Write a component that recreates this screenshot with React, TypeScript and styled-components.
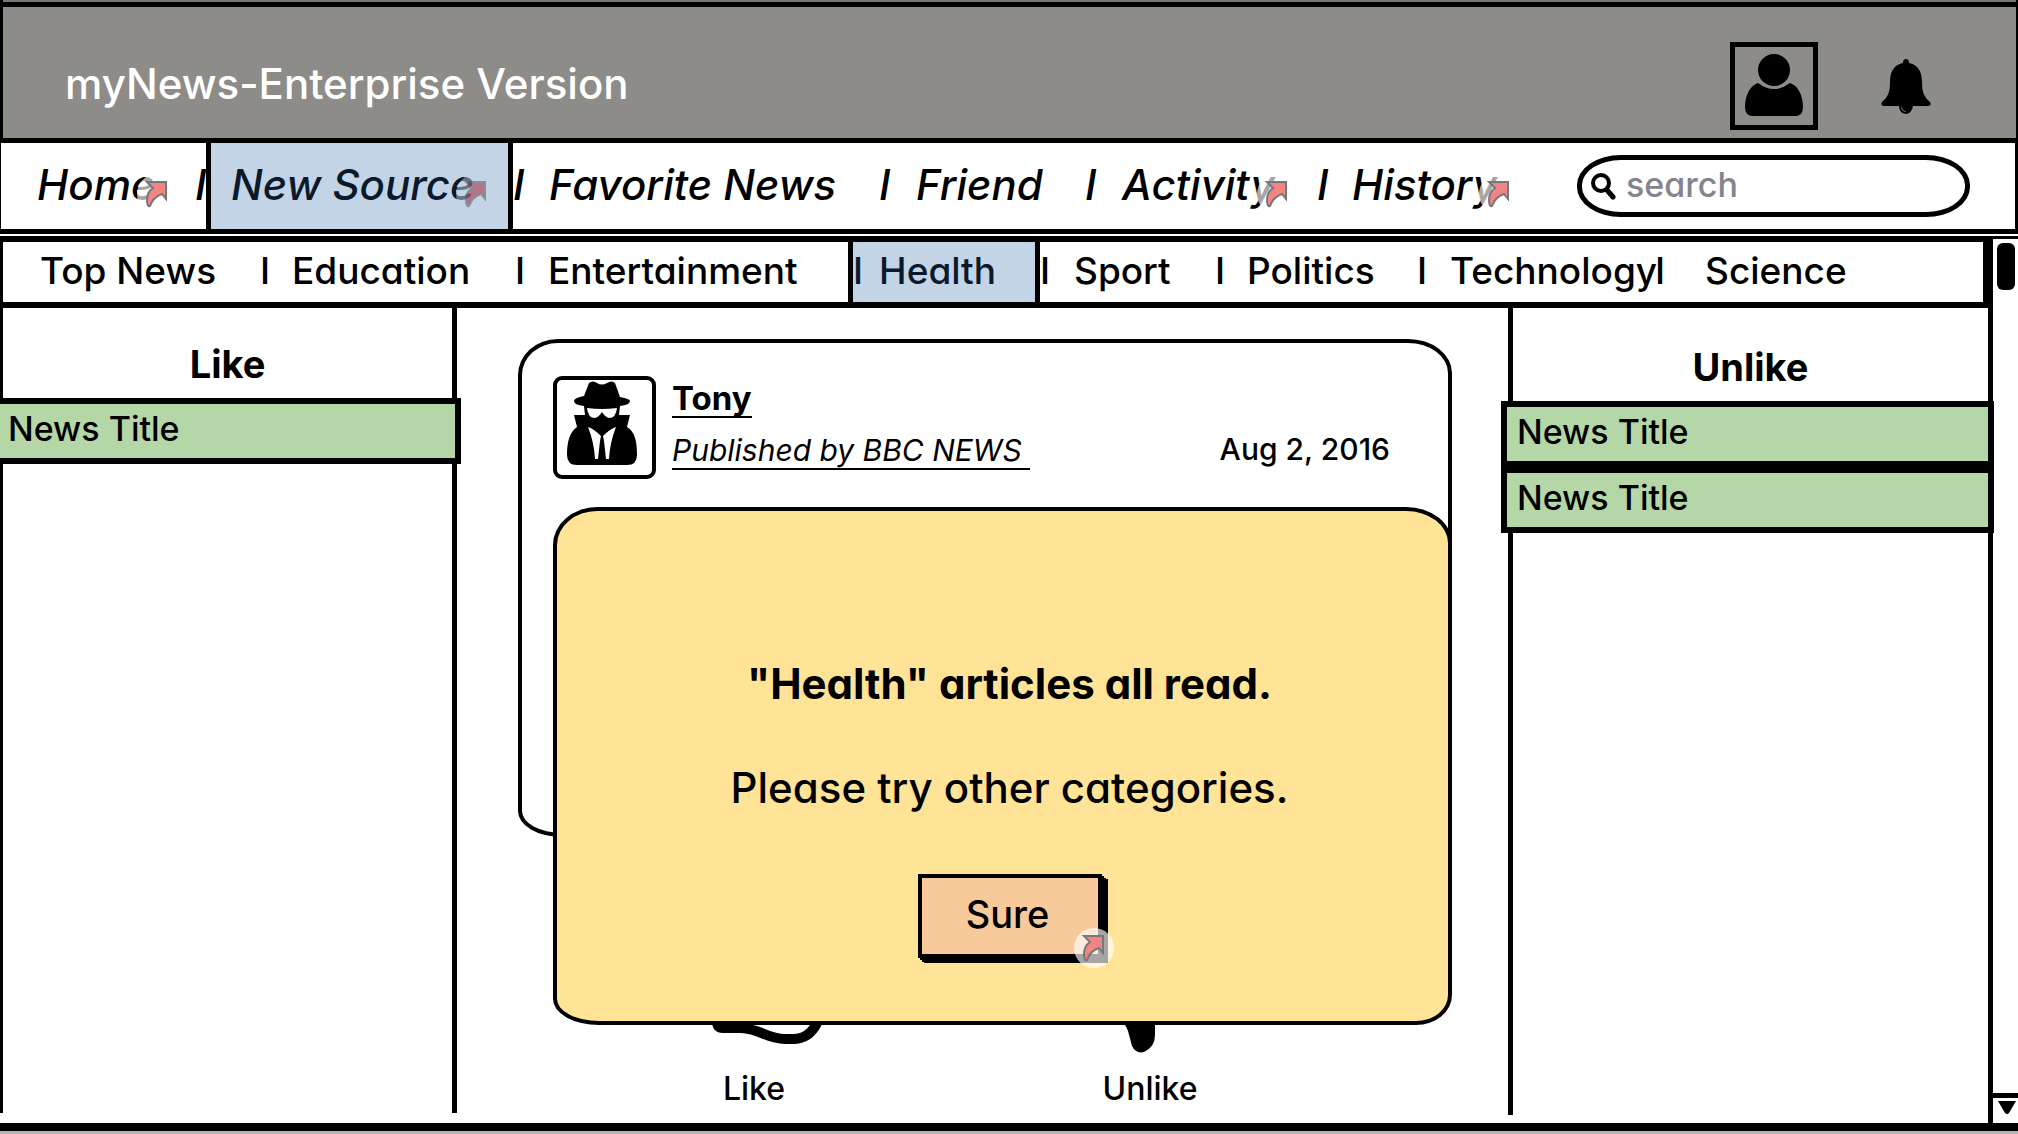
import React from "react";
import styled, { createGlobalStyle, css } from "styled-components";

const ink = "#000";
const blue = "#c3d4e6";
const green = "#b5d6a7";

const GlobalStyle = createGlobalStyle`
  *, *::before, *::after { box-sizing: border-box; }
  body { margin: 0; background: #fff; }
  body, button, input {
    font-family: Inter, "Liberation Sans", sans-serif;
    font-feature-settings: "cv11", "calt" 0;
    font-weight: 500;
    color: ${ink};
  }
  h1, h2, p, ul { margin: 0; padding: 0; font-weight: 500; }
  ul { list-style: none; }
  a { color: inherit; text-decoration: none; }
  button { cursor: pointer; }
`;

const Page = styled.div`
  min-height: 100vh;
  display: flex;
  flex-direction: column;
  overflow: hidden;
  border-bottom: 3px solid #b5b5b5;
`;

const Header = styled.header`
  height: 138px;
  flex: none;
  display: flex;
  align-items: center;
  padding: 34px 66px 0 62px;
  background: linear-gradient(#777 0 2px, ${ink} 2px 7px, #8d8c89 7px);
  border-left: 3px solid ${ink};
  border-right: 2px solid ${ink};
`;

const Brand = styled.h1`
  flex: 1;
  padding-bottom: 5px;
  color: #fff;
  font-size: 42px;
  line-height: 48px;
  white-space: nowrap;
`;

const IconButton = styled.button<{ $boxed?: boolean }>`
  width: 88px;
  height: 88px;
  padding: 0;
  display: grid;
  place-items: center;
  background: none;
  border: ${(p) => (p.$boxed ? `5px solid ${ink}` : "0")};
`;

const HeaderActions = styled.div`
  display: flex;
  gap: 44px;
`;

const MainNav = styled.nav<{ $columns: string }>`
  height: 96px;
  flex: none;
  display: grid;
  grid-template-columns: ${(p) => p.$columns};
  align-items: stretch;
  padding-left: 36px;
  border: solid ${ink};
  border-width: 5px 3px 5px 1px;
  font-size: 42px;
  font-style: italic;
`;

const SubNav = styled.nav<{ $columns: string }>`
  grid-column: 1 / 4;
  height: 72px;
  display: grid;
  grid-template-columns: ${(p) => p.$columns};
  align-items: stretch;
  padding-left: 37px;
  border: solid ${ink};
  border-width: 6px 5px 6px 3px;
  font-size: 37px;
`;

const NavItem = styled.a<{ $active?: boolean; $pad?: number }>`
  display: flex;
  align-items: center;
  gap: 16px;
  white-space: nowrap;
  padding-bottom: 3px;
  ${(p) =>
    p.$active &&
    css`
      margin: -5px 0;
      padding-left: ${p.$pad ?? 0}px;
      color: #0a1a2c;
      background: ${blue};
      border: 5px solid ${ink};
    `}
`;

const Separator = styled.span`
  display: flex;
  align-items: center;
  padding-bottom: 3px;
`;

const Linked = styled.span`
  position: relative;
`;

const Badge = styled.svg<{ $dim?: boolean }>`
  position: absolute;
  right: -22px;
  bottom: -4px;
  width: 40px;
  height: 40px;
  opacity: ${(p) => (p.$dim ? 0.75 : 1)};
`;

const SearchSlot = styled.div`
  display: flex;
  align-items: center;
  padding-right: 45px;
  font-style: normal;
`;

const SearchBox = styled.label`
  width: 100%;
  height: 62px;
  display: flex;
  align-items: center;
  gap: 10px;
  padding: 0 12px 0 8px;
  border: 5px solid ${ink};
  border-radius: 44px / 30px;
`;

const SearchInput = styled.input`
  flex: 1;
  min-width: 0;
  padding: 0 0 2px;
  border: 0;
  outline: 0;
  background: none;
  font-size: 34px;
  line-height: 40px;
  &::placeholder { color: #85838f; opacity: 1; }
`;

const Body = styled.div`
  flex: 1;
  display: grid;
  grid-template-columns: 457fr 1051fr 480fr 30px;
  grid-template-rows: 72px 1fr;
  padding-top: 2px;
  border-bottom: 8px solid ${ink};
`;

const Side = styled.aside<{ $right?: boolean }>`
  margin-bottom: ${(p) => (p.$right ? "8px" : "10px")};
  padding-top: ${(p) => (p.$right ? "36px" : "33px")};
  border: solid ${ink};
  border-width: ${(p) => (p.$right ? "0 0 0 5px" : "0 5px 0 3px")};
`;

const SideTitle = styled.h2`
  height: 57px;
  text-align: center;
  font-size: 38px;
  line-height: 46px;
  font-weight: 700;
`;

const NewsList = styled.ul<{ $right?: boolean }>`
  margin: ${(p) => (p.$right ? "0 -6px 0 -12px" : "0 -9px 0 -11px")};
`;

const NewsItem = styled.li`
  height: 66px;
  display: flex;
  align-items: center;
  padding: 0 6px 4px 10px;
  background: ${green};
  border: 6px solid ${ink};
  font-size: 34px;
  line-height: 44px;
`;

const Feed = styled.main`
  position: relative;
  display: flex;
  flex-direction: column;
  justify-content: space-between;
  padding: 31px 56px 14px 61px;
`;

const Article = styled.article`
  height: 498px;
  display: grid;
  grid-template-columns: 103px 1fr auto;
  align-content: start;
  column-gap: 16px;
  padding: 33px 58px 0 31px;
  border: 4px solid ${ink};
  border-radius: 40px 44px 34px 44px / 36px 34px 28px 26px;
`;

const Avatar = styled.div`
  height: 103px;
  display: grid;
  justify-items: center;
  align-items: start;
  padding-right: 6px;
  border: 4px solid ${ink};
  border-radius: 9px;
`;

const Byline = styled.div`
  display: flex;
  flex-direction: column;
  align-items: flex-start;
  gap: 12px;
  padding-top: 2px;
`;

const Author = styled.a`
  height: 40px;
  border-bottom: 2px solid ${ink};
  font-size: 33px;
  line-height: 40px;
  font-weight: 700;
`;

const Source = styled.a`
  height: 40px;
  padding-right: 8px;
  border-bottom: 2px solid ${ink};
  font-size: 30px;
  line-height: 40px;
  font-style: italic;
  font-weight: 400;
  white-space: nowrap;
`;

const DateText = styled.time`
  align-self: end;
  padding-bottom: 10px;
  font-size: 30px;
  line-height: 40px;
  white-space: nowrap;
`;

const Votes = styled.div`
  display: grid;
  grid-template-columns: 1fr 1fr;
  padding: 0 104px 0 38px;
`;

const Vote = styled.button`
  justify-self: center;
  display: flex;
  flex-direction: column;
  align-items: center;
  gap: 16px;
  padding: 0;
  border: 0;
  background: none;
  font-size: 32px;
  line-height: 40px;
`;

const Dialog = styled.section`
  position: absolute;
  top: 199px;
  left: 96px;
  right: 56px;
  height: 518px;
  display: flex;
  flex-direction: column;
  align-items: center;
  padding: 147px 0 0 14px;
  background: #ffe498;
  border: 4px solid ${ink};
  border-radius: 44px 46px 36px 46px / 38px 36px 30px 26px;
`;

const DialogTitle = styled.h2`
  font-size: 42px;
  line-height: 52px;
  font-weight: 700;
`;

const DialogText = styled.p`
  margin-top: 52px;
  font-size: 42px;
  line-height: 52px;
`;

const SureButton = styled.button`
  position: relative;
  width: 184px;
  height: 84px;
  margin-top: 60px;
  padding: 0 4px 4px 0;
  background: #f8c99b;
  border: 4px solid ${ink};
  box-shadow: 2px 2px 0 ${ink}, 4px 4px 0 ${ink}, 6px 5px 0 ${ink};
  font-size: 38px;
  ${Badge} { right: -16px; bottom: -14px; }
`;

const Scroller = styled.div`
  grid-column: 4;
  grid-row: 1 / 3;
  display: flex;
  flex-direction: column;
  justify-content: space-between;
  border-left: 5px solid ${ink};
  border-top: 3px solid ${ink};
`;

const ScrollThumb = styled.div`
  width: 18px;
  height: 47px;
  margin: 4px 0 0 4px;
  background: ${ink};
  border-radius: 6px;
`;

const ScrollDown = styled.button`
  height: 30px;
  padding: 3px 0 0 2px;
  display: grid;
  place-items: start center;
  background: #fff;
  border: 0;
  border-top: 5px solid ${ink};
`;

const LinkBadge = ({ dim }: { dim?: boolean }) => (
  <Badge $dim={dim} viewBox="0 0 40 40" aria-hidden="true">
    <circle cx="20" cy="20" r="20" fill={dim ? blue : "#fff"} opacity="0.65" />
    <path
      d="M10 8H29V25L25 20Q16 23 13 32Q10 33 10 26Q10 18 16 14Z"
      fill={dim ? "#b0566a" : "#f38484"}
      stroke="#77777c"
      strokeWidth="2"
    />
  </Badge>
);

type Entry = {
  label: string;
  span: number;
  active?: boolean;
  linked?: boolean;
  lead?: boolean;
};

const mainEntries: Entry[] = [
  { label: "Home", span: 158, linked: true },
  { label: "I", span: 11 },
  { label: "New Source", span: 307, active: true, linked: true },
  { label: "I", span: 36 },
  { label: "Favorite News", span: 330 },
  { label: "I", span: 37 },
  { label: "Friend", span: 169 },
  { label: "I", span: 37 },
  { label: "Activity", span: 195, linked: true },
  { label: "I", span: 35 },
  { label: "History", span: 225, linked: true },
];

const subEntries: Entry[] = [
  { label: "Top News", span: 220 },
  { label: "I", span: 32 },
  { label: "Education", span: 223 },
  { label: "I", span: 33 },
  { label: "Entertainment", span: 300 },
  { label: "Health", span: 192, active: true, lead: true },
  { label: "I", span: 34 },
  { label: "Sport", span: 141 },
  { label: "I", span: 32 },
  { label: "Politics", span: 170 },
  { label: "I", span: 33 },
  { label: "Technology", span: 205 },
  { label: "I", span: 50 },
  { label: "Science", span: 278 },
];

const toColumns = (entries: Entry[], rest = "") =>
  entries.map((e) => `minmax(0, ${e.span}fr)`).join(" ") + rest;

const renderEntries = (entries: Entry[]) =>
  entries.map((e, i) =>
    e.label === "I" ? (
      <Separator key={i}>I</Separator>
    ) : (
      <NavItem key={i} href="#" $active={e.active} $pad={e.lead ? 0 : 20}>
        {e.lead && <span>I</span>}
        {e.linked ? (
          <Linked>
            {e.label}
            <LinkBadge dim={e.active} />
          </Linked>
        ) : (
          e.label
        )}
      </NavItem>
    )
  );

const UserIcon = () => (
  <svg width="58" height="64" viewBox="0 0 58 64" aria-hidden="true">
    <ellipse cx="29" cy="16" rx="16" ry="16" />
    <path d="M13 29Q29 41 45 29C54 32 58 43 58 53Q58 62 50 62H8Q0 62 0 53C0 43 4 32 13 29Z" />
  </svg>
);

const BellIcon = () => (
  <svg width="50" height="55" viewBox="0 0 50 55" aria-hidden="true">
    <path d="M25 0Q28 0 28 4C38 6 41 14 41 23C41 33 43 38 49 43Q51 47 47 47H32Q31 54 25 55Q18 54 18 47H3Q-1 47 1 43C7 38 9 33 9 23C9 14 12 6 22 4Q22 0 25 0Z" />
    <path d="M20 48Q21 52 25 53" fill="none" stroke="#777" strokeWidth="1" />
  </svg>
);

const SearchIcon = () => (
  <svg width="26" height="28" viewBox="0 0 26 28" fill="none" stroke={ink} aria-hidden="true">
    <circle cx="11" cy="11" r="8" strokeWidth="4" />
    <path d="M17 18L23 25" strokeWidth="5" strokeLinecap="round" />
  </svg>
);

const SpyIcon = () => (
  <svg width="72" height="86" viewBox="0 0 72 86" aria-hidden="true">
    <path d="M23 3Q27 0 31 3Q36 6 41 3Q46 0 49 3L54 17Q64 19 64 21Q64 25 54 26Q36 29 18 26Q8 25 8 21Q8 18 18 16Z" />
    <path d="M18 26H54L53 35H64L61 47C69 52 71 61 71 75Q71 85 61 85H11Q1 85 1 75C1 61 4 52 11 47L8 35H19Z" />
    <path fill="#fff" d="M21 28Q36 30 51 28Q50 38 43 38Q39 37 36 32Q33 37 29 38Q22 38 21 28Z" />
    <path fill="#fff" d="M22 47Q28 49 35 56L34 61L32 79H29Q28 62 22 47ZM50 47Q44 49 37 56L38 61L40 79H43Q44 62 50 47Z" />
  </svg>
);

const ThumbUpIcon = () => (
  <svg width="138" height="90" viewBox="0 0 138 90" aria-hidden="true">
    <path d="M27 20H66V70H38Q27 70 27 58Z" />
    <path d="M56 65C76 66 82 76 100 76H108Q124 76 132 60V30H90V6L60 40" fill="none" stroke={ink} strokeWidth="10" />
  </svg>
);

const ThumbDownIcon = () => (
  <svg width="112" height="90" viewBox="0 0 112 90" aria-hidden="true">
    <path d="M16 0H84V40Q62 48 61 60V72Q61 84 50 89Q42 91 38 83L34 68Q31 58 16 50Z" />
  </svg>
);

export default function App() {
  return (
    <>
      <GlobalStyle />
      <Page>
        <Header>
          <Brand>myNews-Enterprise Version</Brand>
          <HeaderActions>
            <IconButton $boxed aria-label="Profile"><UserIcon /></IconButton>
            <IconButton aria-label="Notifications"><BellIcon /></IconButton>
          </HeaderActions>
        </Header>
        <MainNav $columns={toColumns(mainEntries, " minmax(0, 438fr)")}>
          {renderEntries(mainEntries)}
          <SearchSlot>
            <SearchBox>
              <SearchIcon />
              <SearchInput type="search" placeholder="search" aria-label="search" />
            </SearchBox>
          </SearchSlot>
        </MainNav>
        <Body>
          <SubNav $columns={toColumns(subEntries)}>{renderEntries(subEntries)}</SubNav>
          <Side>
            <SideTitle>Like</SideTitle>
            <NewsList><NewsItem>News Title</NewsItem></NewsList>
          </Side>
          <Feed>
            <Article>
              <Avatar><SpyIcon /></Avatar>
              <Byline>
                <Author href="#">Tony</Author>
                <Source href="#">Published by BBC NEWS</Source>
              </Byline>
              <DateText>Aug 2, 2016</DateText>
            </Article>
            <Votes>
              <Vote><ThumbUpIcon />Like</Vote>
              <Vote><ThumbDownIcon />Unlike</Vote>
            </Votes>
            <Dialog role="dialog" aria-labelledby="dialog-title">
              <DialogTitle id="dialog-title">"Health" articles all read.</DialogTitle>
              <DialogText>Please try other categories.</DialogText>
              <SureButton>Sure<LinkBadge /></SureButton>
            </Dialog>
          </Feed>
          <Side $right>
            <SideTitle>Unlike</SideTitle>
            <NewsList $right>
              <NewsItem>News Title</NewsItem>
              <NewsItem>News Title</NewsItem>
            </NewsList>
          </Side>
          <Scroller>
            <ScrollThumb />
            <ScrollDown aria-label="Scroll down">
              <svg width="18" height="14" viewBox="0 0 18 14" aria-hidden="true"><path d="M0 0H18L11 12Q9 14 7 12Z" /></svg>
            </ScrollDown>
          </Scroller>
        </Body>
      </Page>
    </>
  );
}
